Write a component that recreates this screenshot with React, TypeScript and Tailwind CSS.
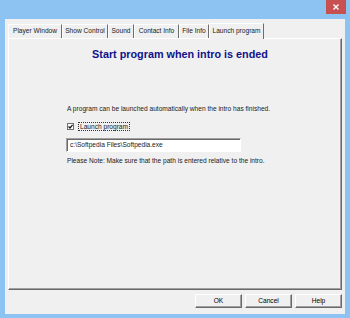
const TABS = [
  { label: "Player Window", w: "w-[54px]" },
  { label: "Show Control", w: "w-[46px]" },
  { label: "Sound", w: "w-[26px]" },
  { label: "Contact Info", w: "w-[45px]" },
  { label: "File Info", w: "w-[30px]" },
];

function DlgButton({ label }: { label: string }) {
  return (
    <button className="w-[47px] h-[14px] flex items-center justify-center bg-[#f0f0f0] border border-t-white border-l-white border-r-[#696969] border-b-[#696969] shadow-[inset_-1px_-1px_0_#a0a0a0] text-[6.6px] leading-none text-black">
      {label}
    </button>
  );
}

export default function App() {
  return (
    <div className="relative w-[350px] h-[318px] bg-[#8cc3f2] pt-[19px] px-[5px] pb-[4px] flex flex-col font-['Liberation_Sans',Arial,sans-serif] overflow-hidden">
      {/* close button */}
      <div className="absolute top-0 right-[4px] w-[20px] h-[14px] bg-[#c75050] flex items-center justify-center">
        <svg width="6" height="6" viewBox="0 0 6 6">
          <path d="M0.5 0.5 L5.5 5.5 M5.5 0.5 L0.5 5.5" stroke="white" strokeWidth="1.4" />
        </svg>
      </div>

      <div className="flex-1 bg-[#f0f0f0] flex flex-col">
        {/* tabs */}
        <div className="flex items-end h-[16px] mt-[3px] ml-[3px] text-[6.6px] leading-none text-[#1a1a1a]">
          {TABS.map((t) => (
            <div
              key={t.label}
              className={`${t.w} h-[14px] flex items-center justify-center border-t border-l border-white border-r border-r-[#6d6d6d]`}
            >
              {t.label}
            </div>
          ))}
          <div className="w-[55px] h-[16px] flex items-center justify-center border-t border-l border-white border-r border-r-[#6d6d6d] bg-[#f0f0f0] relative z-10 mb-[-1px]">
            Launch program
          </div>
        </div>

        {/* tab panel */}
        <div className="w-[334px] h-[252px] ml-[3px] bg-[#f0f0f0] border border-t-white border-l-white border-r-[#696969] border-b-[#696969] shadow-[inset_-1px_-1px_0_#a0a0a0] flex flex-col">
          <h1 className="mt-[9px] pl-[10px] text-center text-[10.8px] leading-[13px] font-bold text-[#12128a]">
            Start program when intro is ended
          </h1>

          <div className="pl-[57px] flex flex-col items-start text-[6.6px] text-[#1a1a1a]">
            <p className="mt-[44px] ml-[1px] leading-[8px]">
              A program can be launched automatically when the intro has finished.
            </p>

            <div className="mt-[8px] ml-[1px] h-[10px] flex items-center">
              <div className="w-[7px] h-[7px] border border-[#707070] bg-white flex items-center justify-center">
                <svg width="5" height="5" viewBox="0 0 5 5">
                  <path d="M0.5 2.5 L2 4 L4.6 0.8" stroke="#111" strokeWidth="1.2" fill="none" />
                </svg>
              </div>
              <span className="ml-[4px] px-[1px] leading-[7px] border border-dotted border-[#333]">
                Launch program
              </span>
            </div>

            <div className="mt-[7px] w-[175px] h-[14px] bg-white border border-t-[#a0a0a0] border-l-[#a0a0a0] border-r-white border-b-white shadow-[inset_1px_1px_0_#696969] flex items-center pl-[3px] leading-none">
              c:\Softpedia Files\Softpedia.exe
            </div>

            <p className="mt-[5px] ml-[1px] leading-[8px]">
              Please Note: Make sure that the path is entered relative to the intro.
            </p>
          </div>
        </div>

        {/* buttons */}
        <div className="mt-[4px] pr-[3px] flex justify-end gap-[3px]">
          <DlgButton label="OK" />
          <DlgButton label="Cancel" />
          <DlgButton label="Help" />
        </div>
      </div>
    </div>
  );
}
